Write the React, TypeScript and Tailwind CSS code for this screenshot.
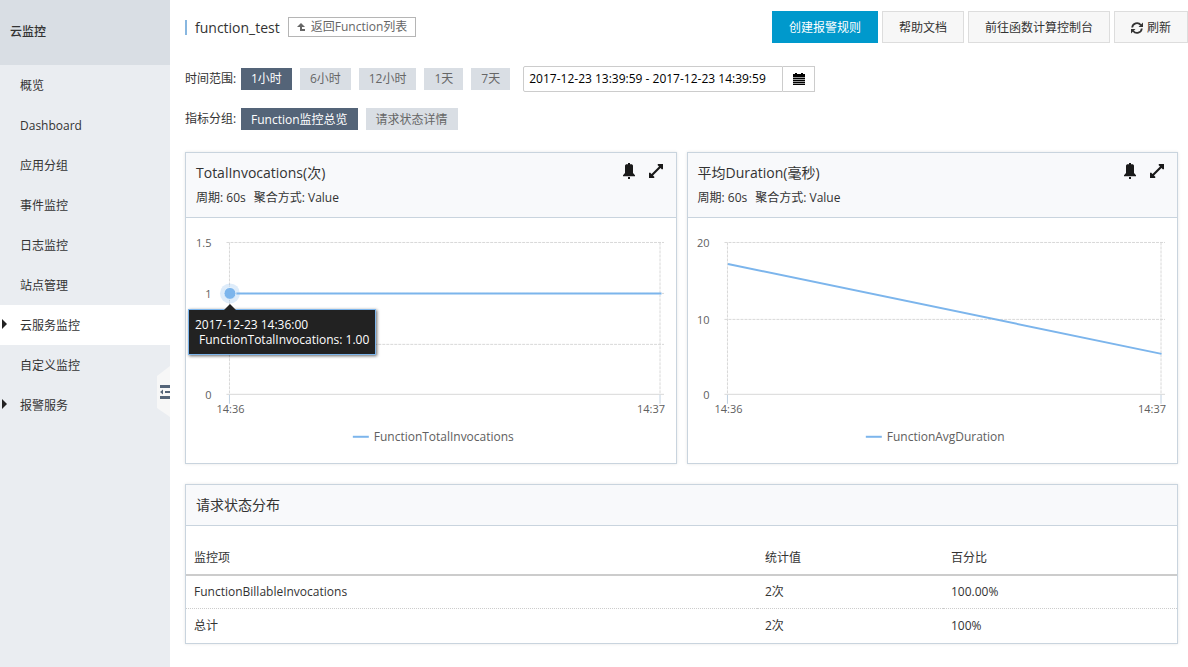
import { useState } from "react"

type MenuItem = {
  label: string
  expandable?: boolean
}

type ChartTick = {
  label: string
  y: number
}

type ChartProps = {
  left: number
  right: number
  ticks: ChartTick[]
  line: string
  legend: string
  legendX: number
  marker?: { x: number; y: number }
}

const menu: MenuItem[] = [
  { label: "概览" },
  { label: "Dashboard" },
  { label: "应用分组" },
  { label: "事件监控" },
  { label: "日志监控" },
  { label: "站点管理" },
  { label: "云服务监控", expandable: true },
  { label: "自定义监控" },
  { label: "报警服务", expandable: true },
]

const ranges = ["1小时", "6小时", "12小时", "1天", "7天"]
const groups = ["Function监控总览", "请求状态详情"]

const rows = [
  { name: "FunctionBillableInvocations", value: "2次", percent: "100.00%" },
  { name: "总计", value: "2次", percent: "100%" },
]

function BellIcon() {
  return (
    <svg width="12" height="16" viewBox="0 0 12 16" fill="#1a1a1a" aria-hidden="true">
      <path d="M5 0h2v1.200h2l1 1.300V10l2 2.200v1H0v-1L2 10V2.500l1-1.300h2z" />
      <path d="M5 14h2v2H5z" />
    </svg>
  )
}

function ExpandIcon() {
  return (
    <svg width="14" height="14" viewBox="0 0 14 14" fill="#1a1a1a" aria-hidden="true">
      <path d="M9 0h5v5l-1 .5-1.500-1.500L4 11.500 5.500 13 5 14H0V9l1-.5L2.500 10 10 2.500 8.500 1z" />
    </svg>
  )
}

function BackIcon() {
  return (
    <svg width="8" height="8" viewBox="0 0 8 8" fill="#666" aria-hidden="true">
      <path d="M4 0l4 4H5v2h3v2H3V4H0z" />
    </svg>
  )
}

function RefreshIcon() {
  return (
    <svg width="12" height="12" viewBox="0 0 12 12" fill="none" aria-hidden="true">
      <path d="M1.200 5.500A4.800 4.800 0 0 1 9.800 3M10.800 6.500A4.800 4.800 0 0 1 2.200 9" stroke="#333" strokeWidth="1.800" />
      <path d="M12 .5V5H7.500zM0 11.500V7h4.500z" fill="#333" />
    </svg>
  )
}

function CalendarIcon() {
  return (
    <svg width="12" height="12" viewBox="0 0 12 12" aria-hidden="true">
      <path d="M0 1h2V0h2v1h4V0h2v1h2v3H0z" fill="#000" />
      <path d="M0 4h12v8H0z" fill="#999" />
      <path d="M0 5h12v1H0zM0 7h12v1H0zM0 9h12v1H0zM0 11h12v1H0z" fill="#000" />
    </svg>
  )
}

function Sidebar() {
  return (
    <aside className="relative w-[170px] shrink-0 bg-[#eaedf1]">
      <div className="flex h-[65px] items-center bg-[#d9dee4] px-[10px] pb-[2px] font-medium">云监控</div>
      <nav>
        {menu.map((item) => (
          <a
            key={item.label}
            href="#"
            className={`relative flex h-10 items-center pl-5 pt-[2px] ${item.label === "云服务监控" ? "bg-white" : ""}`}
          >
            {item.expandable && (
              <svg className="absolute left-[2px] top-[14px]" width="5" height="10" viewBox="0 0 5 10" aria-hidden="true">
                <path d="M0 0l5 5-5 5z" fill="#222" />
              </svg>
            )}
            {item.label}
          </a>
        ))}
      </nav>
      <button aria-label="收起菜单" className="absolute right-0 top-[366px]">
        <svg width="13" height="51" viewBox="0 0 13 51" aria-hidden="true">
          <path d="M13 0v51L0 42V10z" fill="#f7f7f7" />
          <path d="M3 19h10v3H3zM8 25h5v2H8zM3 30h10v3H3zM3 26l3-2.500v5z" fill="#546478" />
        </svg>
      </button>
    </aside>
  )
}

function Chart({ left, right, ticks, line, legend, legendX, marker }: ChartProps) {
  const bottom = 176.5
  return (
    <svg viewBox="0 0 490 245" className="block h-auto w-full" role="img" aria-label={legend}>
      <g stroke="#d8d8d8" strokeDasharray="3 1" fill="none">
        {ticks.map((t) => t.y < bottom && <path key={t.y} d={`M${left - 3} ${t.y}H${right + 4}`} />)}
        <path d={`M${left} 24.5V${bottom}M${right} 24.5V${bottom}`} />
      </g>
      <path d={`M${left - 3} ${bottom}H${right + 4}`} stroke="#d8d8d8" />
      <path d={`M${left} 177v9M${right} 177v9`} stroke="#c0d0e0" />
      <path d={line} stroke="#7cb5ec" strokeWidth="2" fill="none" />
      {marker && (
        <g>
          <circle cx={marker.x} cy={marker.y} r="10" fill="#7cb5ec" fillOpacity="0.25" />
          <circle cx={marker.x} cy={marker.y} r="6" fill="#7cb5ec" stroke="#e6f1fb" />
        </g>
      )}
      <g fill="#606060" fontSize="11">
        {ticks.map((t) => t.label && (
          <text key={t.y} x={left - 18} y={t.y + 5} textAnchor="end">
            {t.label}
          </text>
        ))}
        <text x={left + 1} y="195" textAnchor="middle">14:36</text>
        <text x={right + 5} y="195" textAnchor="end">14:37</text>
      </g>
      <path d={`M${legendX} 219h16`} stroke="#7cb5ec" strokeWidth="2" />
      <text x={legendX + 21} y="223" fill="#606060" fontSize="12">
        {legend}
      </text>
    </svg>
  )
}

function Tooltip() {
  return (
    <div className="absolute left-[2px] top-[91px] border border-[#7cb5ec] bg-[#222] px-[6px] py-[7px] leading-[15px] text-white shadow-[1px_1px_3px_rgba(0,0,0,0.6)]">
      <svg className="absolute left-[35px] top-[-6px]" width="12" height="6" viewBox="0 0 12 6" aria-hidden="true">
        <path d="M6 0l6 6H0z" fill="#222" />
      </svg>
      <div>2017-12-23 14:36:00</div>
      <div className="pl-1">FunctionTotalInvocations: 1.00</div>
    </div>
  )
}

function ChartCard({ title, children }: { title: string; children: React.ReactNode }) {
  return (
    <section className="border border-[#c9d4de] shadow-[0_0_3px_rgba(0,0,0,0.1)]">
      <header className="flex h-[65px] justify-between border-b border-[#c9d4de] bg-[#f8f9fb] px-[10px] pt-[9px]">
        <div>
          <h2 className="text-sm leading-[22px]">{title}</h2>
          <p className="flex gap-2 leading-7">
            <span>周期: 60s</span>
            <span>聚合方式: Value</span>
          </p>
        </div>
        <div className="flex h-[18px] items-center gap-[14px] pr-[3px]">
          <button aria-label="报警"><BellIcon /></button>
          <button aria-label="放大"><ExpandIcon /></button>
        </div>
      </header>
      <div className="relative">{children}</div>
    </section>
  )
}

function Tabs({ label, items }: { label: string; items: string[] }) {
  const [active, setActive] = useState(items[0])
  return (
    <div className="flex items-center">
      <span className="w-14 shrink-0">{label}:</span>
      <div className="flex gap-2">
        {items.map((item) => (
          <button
            key={item}
            onClick={() => setActive(item)}
            className={`h-[22px] px-[10px] pt-px ${item === active ? "bg-[#546478] text-white" : "bg-[#d9dee4] text-[#666]"}`}
          >
            {item}
          </button>
        ))}
      </div>
    </div>
  )
}

export default function App() {
  return (
    <div className="flex min-h-screen bg-white font-['Open_Sans','Noto_Sans_CJK_SC',sans-serif] text-xs text-[#333]">
      <Sidebar />
      <main className="min-w-0 flex-1 pl-[15px]">
        <div className="flex justify-between pt-[11px]">
          <div className="flex h-8 items-center gap-2">
            <h1 className="border-l-2 border-[#88b7e0] pl-2 text-sm leading-[15px]">function_test</h1>
            <button className="flex h-5 items-center gap-[6px] border border-[#b5b5b5] px-2 text-[#666]">
              <BackIcon />
              返回Function列表
            </button>
          </div>
          <div className="flex h-8 gap-1">
            <button className="bg-[#0099cc] px-[17px] pt-[2px] text-white">创建报警规则</button>
            <button className="border border-[#ddd] bg-[#f7f7f7] px-4 pt-[2px]">帮助文档</button>
            <button className="border border-[#ddd] bg-[#f7f7f7] px-4 pt-[2px]">前往函数计算控制台</button>
            <button className="flex items-center gap-1 border border-[#ddd] bg-[#f7f7f7] px-4 pt-[2px]">
              <RefreshIcon />
              刷新
            </button>
          </div>
        </div>

        <div className="pr-[10px]">
          <div className="mt-[22px] flex h-[27px] items-center gap-[13px]">
            <Tabs label="时间范围" items={ranges} />
            <div className="flex h-[26px]">
              <input
                aria-label="时间范围"
                defaultValue="2017-12-23 13:39:59 - 2017-12-23 14:39:59"
                className="w-[260px] rounded-l-[2px] border border-[#ccc] px-[5px] text-black"
              />
              <button aria-label="选择日期" className="flex w-8 items-center justify-center border border-l-0 border-[#ccc]">
                <CalendarIcon />
              </button>
            </div>
          </div>
          <div className="mt-4">
            <Tabs label="指标分组" items={groups} />
          </div>

          <div className="mt-[22px] grid grid-cols-2 gap-[10px]">
            <ChartCard title="TotalInvocations(次)">
              <Chart
                left={43.5}
                right={474.5}
                ticks={[
                  { label: "1.5", y: 24.5 },
                  { label: "1", y: 75.5 },
                  { label: "", y: 126.5 },
                  { label: "0", y: 176.5 },
                ]}
                line="M44 75.5H476"
                legend="FunctionTotalInvocations"
                legendX={167}
                marker={{ x: 44, y: 75.5 }}
              />
              <Tooltip />
            </ChartCard>
            <ChartCard title="平均Duration(毫秒)">
              <Chart
                left={39.5}
                right={473.5}
                ticks={[
                  { label: "20", y: 24.5 },
                  { label: "10", y: 101.5 },
                  { label: "0", y: 176.5 },
                ]}
                line="M40 46L474 136"
                legend="FunctionAvgDuration"
                legendX={178}
              />
            </ChartCard>
          </div>

          <section className="mt-5 border border-[#c9d4de] shadow-[0_0_3px_rgba(0,0,0,0.1)]">
            <h2 className="h-[41px] border-b border-[#c9d4de] bg-[#f8f9fb] px-[10px] text-sm leading-10">请求状态分布</h2>
            <table className="w-full table-fixed text-left">
              <thead>
                <tr className="h-[49px] border-b-2 border-[#ccc]">
                  <th className="px-2 pt-4 font-normal">监控项</th>
                  <th className="w-[186px] px-2 pt-4 font-normal">统计值</th>
                  <th className="w-[234px] px-2 pt-4 font-normal">百分比</th>
                </tr>
              </thead>
              <tbody>
                {rows.map((row) => (
                  <tr key={row.name} className="h-[34px] border-b border-dotted border-[#ccc] last:border-b-0">
                    <td className="px-2">{row.name}</td>
                    <td className="px-2">{row.value}</td>
                    <td className="px-2">{row.percent}</td>
                  </tr>
                ))}
              </tbody>
            </table>
          </section>
        </div>
      </main>
    </div>
  )
}
